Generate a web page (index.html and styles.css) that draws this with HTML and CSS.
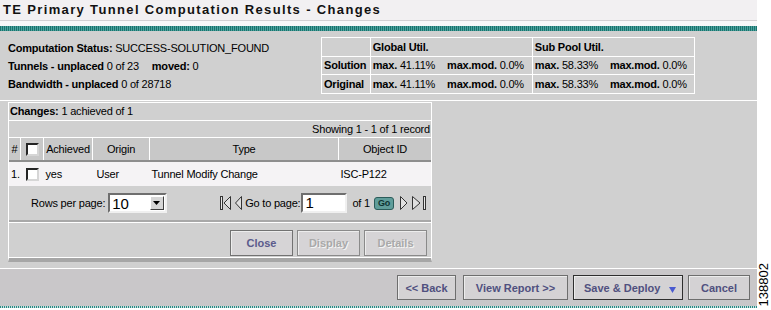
FILE: index.html
```html
<!DOCTYPE html>
<html>
<head>
  <meta charset="UTF-8">
  <title>TE Primary Tunnel Computation Results - Changes</title>
  <link rel="stylesheet" href="styles.css">
</head>
<body>
  <div class="page">
    <div class="main">
      <div class="titlebar"><h1>TE Primary Tunnel Computation Results - Changes</h1></div>
      <div class="gap"></div>
      <div class="stripe"></div>

      <div class="summary">
        <div class="status">
          <div><b>Computation Status:</b> SUCCESS-SOLUTION_FOUND</div>
          <div><b>Tunnels - unplaced</b> 0 of 23 <b class="moved">moved:</b> 0</div>
          <div><b>Bandwidth - unplaced</b> 0 of 28718</div>
        </div>
        <table class="util">
          <tr>
            <th class="lbl"></th>
            <th class="col">Global Util.</th>
            <th class="col">Sub Pool Util.</th>
          </tr>
          <tr>
            <th class="lbl">Solution</th>
            <td><b>max.</b> 41.11% <span class="mm"><b>max.mod.</b> 0.0%</span></td>
            <td><b>max.</b> 58.33% <span class="mm"><b>max.mod.</b> 0.0%</span></td>
          </tr>
          <tr>
            <th class="lbl">Original</th>
            <td><b>max.</b> 41.11% <span class="mm"><b>max.mod.</b> 0.0%</span></td>
            <td><b>max.</b> 58.33% <span class="mm"><b>max.mod.</b> 0.0%</span></td>
          </tr>
        </table>
      </div>

      <div class="work">
        <div class="changes">
          <div class="caption"><b>Changes:</b> 1 achieved of 1</div>
          <div class="showing">Showing 1 - 1 of 1 record</div>
          <table class="grid">
            <tr class="head">
              <th class="c-num">#</th>
              <th class="c-cb"><span class="checkbox"></span></th>
              <th class="c-ach">Achieved</th>
              <th class="c-org">Origin</th>
              <th class="c-type">Type</th>
              <th class="c-obj">Object ID</th>
            </tr>
            <tr class="row">
              <td>1.</td>
              <td class="c-cb"><span class="checkbox"></span></td>
              <td>yes</td>
              <td class="pad">User</td>
              <td>Tunnel Modify Change</td>
              <td>ISC-P122</td>
            </tr>
          </table>

          <div class="pager">
            <div class="rows">
              Rows per page:
              <span class="select"><span class="val">10</span><span class="drop"><svg width="8" height="5" viewBox="0 0 8 5"><polygon points="0,0 7,0 3.5,4" fill="#000"/></svg></span></span>
            </div>
            <div class="nav">
              <svg width="11" height="14" viewBox="0 0 11 14"><rect x="0.5" y="0.5" width="2" height="13" fill="#e8e8e8" stroke="#333"/><polygon points="10.5,0.5 4,7 10.5,13.5" fill="#e0e0e0" stroke="#333"/></svg>
              <svg class="prev" width="7" height="14" viewBox="0 0 7 14"><polygon points="6.5,0.5 0.5,7 6.5,13.5" fill="#e0e0e0" stroke="#333"/></svg>
              <span>Go to page:</span>
              <span class="input">1</span>
              <span class="of">of 1</span>
              <span class="go">Go</span>
              <svg width="8" height="14" viewBox="0 0 8 14"><polygon points="0.5,0.5 7,7 0.5,13.5" fill="#e0e0e0" stroke="#333"/></svg>
              <svg width="15" height="14" viewBox="0 0 15 14"><polygon points="0.5,0.5 8,7 0.5,13.5" fill="#e0e0e0" stroke="#333"/><rect x="11.5" y="0.5" width="2" height="13" fill="#e8e8e8" stroke="#333"/></svg>
            </div>
          </div>

          <div class="btnrow">
            <button class="btn">Close</button>
            <button class="btn off">Display</button>
            <button class="btn off">Details</button>
          </div>
        </div>
      </div>

      <div class="actions">
        <button class="abtn back">&lt;&lt; Back</button>
        <button class="abtn report">View Report &gt;&gt;</button>
        <button class="abtn deploy"><span>Save &amp; Deploy</span><svg width="7" height="6" viewBox="0 0 7 6"><polygon points="0,0 7,0 3.5,6" fill="#4a5ad0"/></svg></button>
        <button class="abtn cancel">Cancel</button>
      </div>
      <div class="dots"></div>
    </div>
    <div class="fignum"><span>138802</span></div>
  </div>
</body>
</html>
```

FILE: styles.css
```css
body {
  margin: 0;
  font-family: "Liberation Sans", Arial, sans-serif;
  font-size: 11px;
  letter-spacing: -0.2px;
  color: #000;
  background: #fff;
}
.page {
  display: flex;
  width: 771px;
  height: 310px;
  overflow: hidden;
}
.main {
  width: 757px;
  display: flex;
  flex-direction: column;
}
.titlebar {
  height: 20px;
  background: #f2f0f2;
  border-bottom: 1px solid #d2d0d2;
}
.titlebar h1 {
  margin: 0;
  padding: 2px 0 0 3px;
  font-size: 13px;
  line-height: 16px;
  letter-spacing: 1.35px;
  color: #111;
}
.gap {
  height: 5px;
  background: #f8f7f8;
}
.stripe {
  height: 5px;
  background: repeating-linear-gradient(90deg, #1c716c 0 1px, #4aa49f 1px 2px);
}

/* summary block */
.summary {
  display: flex;
  height: 63px;
  padding: 6px 8px 0;
  background: #d0d0d0;
  border-bottom: 1px solid #fff;
}
.status {
  width: 313px;
  margin-top: 2px;
  line-height: 18px;
}
.moved {
  margin-left: 10px;
}
.util {
  border-collapse: collapse;
  border: 1px solid #fff;
  width: 374px;
  height: 57px;
}
.util th, .util td {
  border: 1px solid #fff;
  padding: 0 2px;
  text-align: left;
  white-space: nowrap;
}
.util .lbl {
  width: 44px;
}
.util .col {
  width: 158px;
}
.util .mm {
  margin-left: 9px;
}

/* changes panel */
.work {
  height: 164px;
  padding: 1px 0 2px 8px;
  background: #d0d0d0;
}
.changes {
  width: 422px;
  border: 1px solid #fff;
  border-bottom: 4px solid #a6a6a6;
}
.caption {
  height: 17px;
  line-height: 17px;
  padding-left: 1px;
  border-bottom: 1px solid #fff;
}
.showing {
  height: 16px;
  line-height: 16px;
  text-align: right;
  padding-right: 1px;
  border-bottom: 1px solid #fff;
}
.grid {
  width: 100%;
  border-collapse: collapse;
}
.grid .head th {
  height: 22px;
  padding: 0;
  font-weight: normal;
  background: #c8c8c8;
  border-left: 1px solid #fff;
  border-bottom: 2px solid #8e8e8e;
}
.grid .head th:first-child {
  border-left: none;
}
.c-num { width: 11px; }
.c-cb { width: 22px; }
.c-ach { width: 48px; }
.c-org { width: 56px; }
.c-type { width: 188px; }
.grid .row td {
  height: 24px;
  padding: 0 0 0 2px;
  background: #f5f3f5;
}
.grid .row td.pad {
  padding-left: 4px;
}
.grid .row td.c-cb {
  padding-left: 0;
  text-align: center;
}
.checkbox {
  display: inline-block;
  width: 9px;
  height: 9px;
  background: #fff;
  border: 2px inset #d6d6d6;
  border-top-color: #7a7a7a;
  border-left-color: #7a7a7a;
  vertical-align: middle;
}

.pager {
  height: 34px;
  display: flex;
  align-items: center;
  justify-content: space-between;
  padding: 0 4px 0 22px;
}
.rows, .nav {
  display: flex;
  align-items: center;
}
.select {
  display: inline-flex;
  align-items: center;
  margin-left: 3px;
  width: 55px;
  height: 16px;
  background: #fff;
  border: 2px solid;
  border-color: #6e6e6e #f0f0f0 #f0f0f0 #6e6e6e;
}
.select .val {
  flex: 1;
  font-size: 15px;
  padding-left: 2px;
}
.drop {
  width: 12px;
  height: 12px;
  margin-right: 1px;
  display: flex;
  align-items: center;
  justify-content: center;
  background: #d6d6d6;
  border: 1px solid;
  border-color: #fff #404040 #404040 #fff;
}
.nav svg {
  display: block;
}
.nav .prev {
  margin: 0 3px 0 4px;
}
.input {
  width: 40px;
  height: 16px;
  margin-left: 1px;
  padding-left: 2px;
  font-size: 15px;
  line-height: 16px;
  background: #fff;
  border: 2px solid;
  border-color: #6e6e6e #f0f0f0 #f0f0f0 #6e6e6e;
}
.of {
  margin: 0 4px 0 5px;
}
.go {
  width: 18px;
  height: 11px;
  margin-right: 6px;
  font-size: 9px;
  font-weight: bold;
  line-height: 11px;
  text-align: center;
  color: #0e3432;
  background: #5f9d9a;
  border: 1px solid #2b5c5a;
  border-radius: 3px;
}
.nav svg + svg {
  margin-left: 4px;
}

.btnrow {
  height: 38px;
  display: flex;
  justify-content: flex-end;
  gap: 4px;
  padding: 8px 4px 0 0;
  box-sizing: border-box;
  border-top: 2px solid #a8a8a8;
  border-bottom: 1px solid #fff;
  box-shadow: inset 0 1px 0 #fff;
}
.btn {
  width: 63px;
  height: 26px;
  font-family: "Liberation Sans", Arial, sans-serif;
  font-size: 11px;
  font-weight: bold;
  color: #5b5b8c;
  background: #d6d4d6;
  border: 1px solid #727272;
  box-shadow: inset 1px 1px 0 #ededed;
  padding: 0;
}
.btn.off {
  color: #a9a9a9;
  text-shadow: 1px 1px 0 #f4f4f4;
  border-color: #8a8a8a;
}

/* bottom action bar */
.actions {
  height: 38px;
  display: flex;
  justify-content: flex-end;
  align-items: flex-start;
  gap: 5px;
  padding: 6px 7px 0 0;
  box-sizing: border-box;
  background: #c9c7c9;
  border-top: 1px solid #fff;
}
.abtn {
  height: 25px;
  padding: 0;
  font-family: "Liberation Sans", Arial, sans-serif;
  font-size: 11px;
  font-weight: bold;
  color: #50507f;
  background: #d4d2d4;
  border: 1px solid #6e6e6e;
  box-shadow: inset 1px 1px 0 #ececec;
  white-space: nowrap;
}
.back { width: 59px; margin-right: 2px; }
.report { width: 105px; }
.deploy {
  width: 110px;
  border-color: #2e2e2e;
  display: flex;
  align-items: center;
  justify-content: space-between;
  padding: 0 6px 0 10px;
}
.deploy svg {
  margin-top: 4px;
}
.cancel { width: 62px; }
.dots {
  height: 2px;
  background: repeating-linear-gradient(90deg, #2a8a85 0 1px, #c9dedd 1px 2px);
}

.fignum {
  width: 14px;
  display: flex;
  flex-direction: column;
  justify-content: flex-end;
  align-items: center;
  padding-bottom: 4px;
  box-sizing: border-box;
}
.fignum span {
  writing-mode: vertical-rl;
  transform: rotate(180deg);
  font-size: 13px;
  line-height: 12px;
  letter-spacing: 0;
}
```
